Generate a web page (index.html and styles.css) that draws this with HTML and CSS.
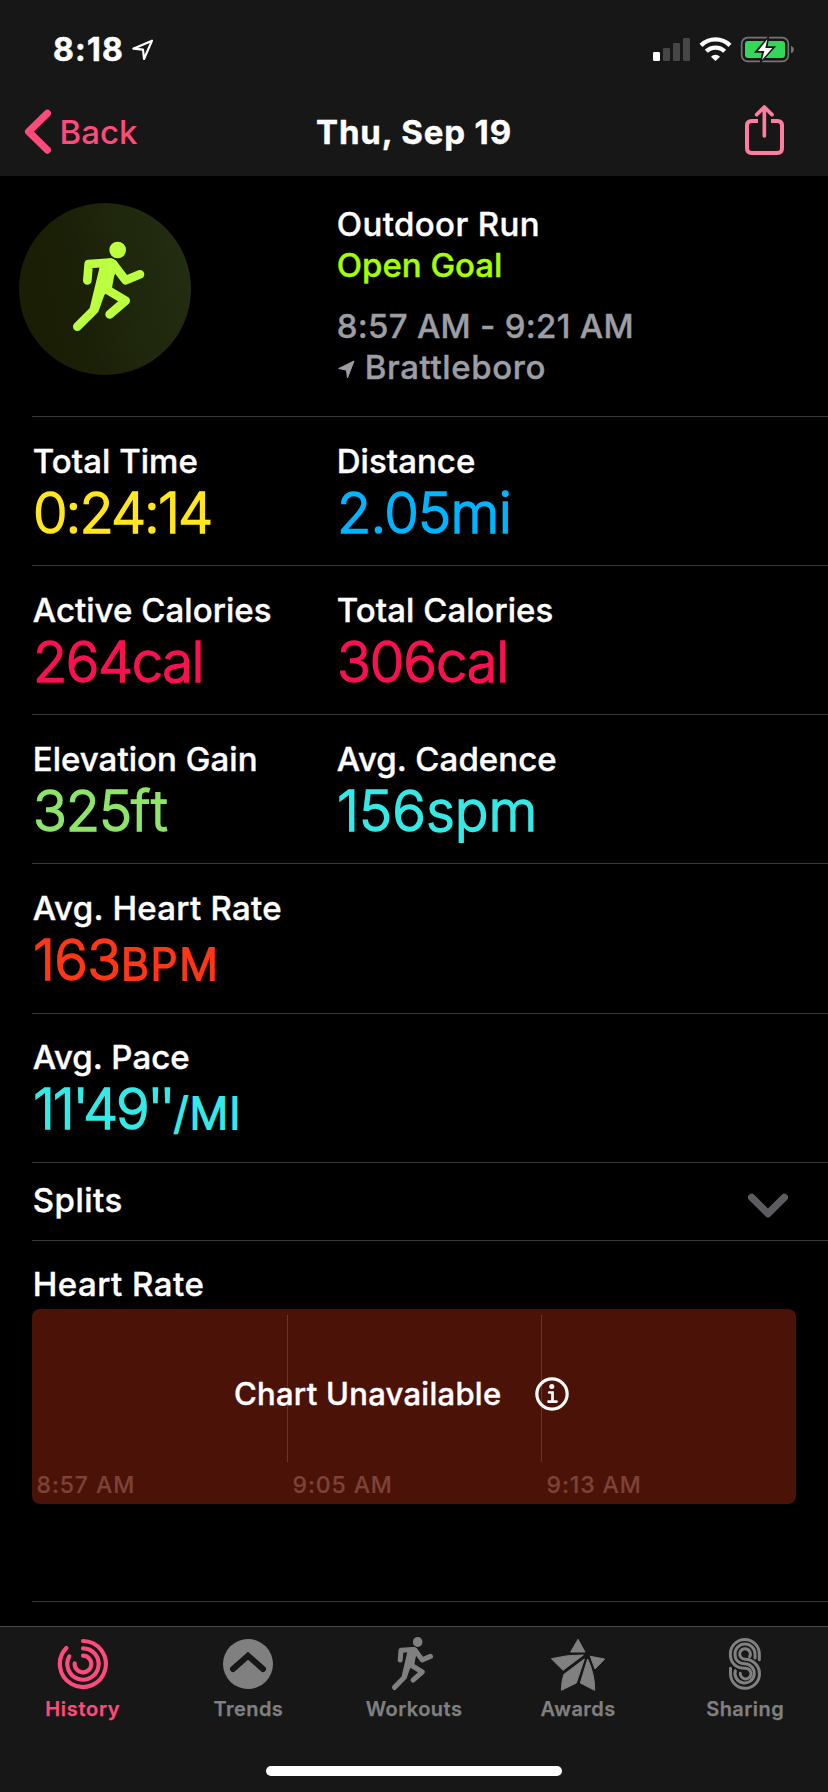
FILE: index.html
```html
<!DOCTYPE html>
<html lang="en">
<head>
<meta charset="utf-8">
<title>Workout</title>
<link rel="stylesheet" href="styles.css">
</head>
<body>
<div class="screen">
  <header class="top">
    <div class="status">
      <div class="status-left">
        <span class="clock">8:18</span>
        <svg class="loc" viewBox="393 114 72 72"><path d="M456 122 400 146 429 149 432 177Z" fill="none" stroke="#fff" stroke-width="6.5" stroke-linejoin="round"/></svg>
      </div>
      <svg class="status-icons" viewBox="714 108 429 81">
        <rect x="717" y="156" width="21" height="27" rx="4" fill="#fff"/>
        <g fill="#464646"><rect x="747" y="144" width="21" height="39" rx="4"/><rect x="777" y="129" width="21" height="54" rx="4"/><rect x="807" y="114" width="21" height="69" rx="4"/></g>
        <g fill="none" stroke="#fff" stroke-width="13">
          <path d="M861 136A62 62 0 0 1 948 136"/><path d="M877 154A39 39 0 0 1 932 154"/>
        </g>
        <path d="M904.500 183 891 170A19 19 0 0 1 918 170Z" fill="#fff"/>
        <rect x="983" y="113" width="140" height="71" rx="18" fill="none" stroke="#757575" stroke-width="5"/>
        <path d="M1131 137Q1140 141 1140 148.500T1131 160Z" fill="#757575"/>
        <rect x="993" y="123" width="120" height="51" rx="9" fill="#32d857"/>
        <path d="M1063 112 1025 156H1047L1040 186 1081 141H1058Z" fill="#171717" stroke="#171717" stroke-width="5"/>
        <path d="M1060 118 1032 153H1051L1044 180 1075 144H1054Z" fill="#fff"/>
      </svg>
    </div>
    <nav class="nav">
      <a class="back">
        <svg class="back-icon" viewBox="72 328 84 138"><path d="M142 341 86 396 142 451" fill="none" stroke="#ff4b7b" stroke-width="22" stroke-linecap="round" stroke-linejoin="round"/></svg>
        <span>Back</span>
      </a>
      <h1 class="title">Thu, Sep 19</h1>
      <svg class="share" viewBox="990 312 123 156" fill="none" stroke="#ff7d9e" stroke-width="12" stroke-linejoin="round">
        <path d="M1032 363H1013Q999 363 999 377V445Q999 459 1013 459H1090Q1104 459 1104 445V377Q1104 363 1090 363H1071"/>
        <path d="M1051 408V322M1028 344 1051 321 1074 344" stroke-width="11" stroke-linecap="round"/>
      </svg>
    </nav>
  </header>

  <main class="content">
    <section class="hero">
      <svg class="badge" viewBox="57 69 516 516">
        <defs><linearGradient id="g" x1="0" y1=".6" x2="1" y2=".4"><stop offset=".2" stop-color="#191e05"/><stop offset="1" stop-color="#232d12"/></linearGradient></defs>
        <circle cx="315" cy="327" r="258" fill="url(#g)"/>
        <g fill="none" stroke="#bcff41" stroke-width="26" stroke-linecap="round" stroke-linejoin="round">
          <path d="M262 301 266 252 330 248"/>
          <path d="M340 252 377 301 420 283"/>
          <path d="M281 391 232 440"/>
          <path d="M318 327 377 362 329 403"/>
        </g>
        <path d="M304 240 333 235Q350 238 355 255L342 290 336 324 313 345 294 398 269 385Z" fill="#bcff41"/>
        <circle cx="353" cy="210" r="25" fill="#bcff41"/>
      </svg>
      <div class="hero-text">
        <div class="kind">Outdoor Run</div>
        <div class="goal">Open Goal</div>
        <div class="when">8:57 AM - 9:21 AM</div>
        <div class="where">
          <svg class="pin" viewBox="52 508 52 58"><path d="M101 511 54 534 78 539 81 563Z" fill="#9d9da4" stroke="#9d9da4" stroke-width="3" stroke-linejoin="round"/></svg>
          <span>Brattleboro</span>
        </div>
      </div>
    </section>

    <section class="row">
      <div class="stat"><div class="label">Total Time</div><div class="value yellow time">0:24:14</div></div>
      <div class="stat"><div class="label">Distance</div><div class="value blue distance">2.05mi</div></div>
    </section>
    <section class="row">
      <div class="stat"><div class="label">Active Calories</div><div class="value pink active-cal">264cal</div></div>
      <div class="stat"><div class="label">Total Calories</div><div class="value pink total-cal">306cal</div></div>
    </section>
    <section class="row">
      <div class="stat"><div class="label">Elevation Gain</div><div class="value green gain">325<span class="feet">ft</span></div></div>
      <div class="stat"><div class="label">Avg. Cadence</div><div class="value cyan">156spm</div></div>
    </section>
    <section class="row row-heart">
      <div class="stat"><div class="label">Avg. Heart Rate</div><div class="value red bpm">163<span class="unit">BPM</span></div></div>
    </section>
    <section class="row row-pace">
      <div class="stat"><div class="label">Avg. Pace</div><div class="value cyan pace">11'49<span class="sec">''</span><span class="unit">/MI</span></div></div>
    </section>

    <section class="splits">
      <span class="label wide">Splits</span>
      <svg class="chevron" viewBox="1002 100 120 75"><path d="M1013 113 1062 162 1111 113" fill="none" stroke="#5b5b60" stroke-width="22" stroke-linecap="round" stroke-linejoin="round"/></svg>
    </section>

    <section class="heart">
      <div class="label wide">Heart Rate</div>
      <div class="chart">
        <div class="col"><span class="tick">8:57 AM</span></div>
        <div class="col"><span class="tick">9:05 AM</span></div>
        <div class="col"><span class="tick">9:13 AM</span></div>
        <div class="notice">
          <span>Chart Unavailable</span>
          <svg class="info" viewBox="362 653 101 101"><circle cx="412.500" cy="703.500" r="45" fill="none" stroke="#fff" stroke-width="9.500"/><circle cx="412" cy="681" r="7.500" fill="#fff"/><path d="M404 699H414V725M402 726H426" fill="none" stroke="#fff" stroke-width="8" stroke-linecap="round"/></svg>
        </div>
      </div>
    </section>
  </main>

  <footer class="tabbar">
    <nav class="tabs">
      <a class="tab active">
        <svg class="icon" viewBox="171 138 156 168" fill="none" stroke="#ff4b7b" stroke-width="12.500" stroke-linecap="round">
          <path d="M249 153A69 69 0 1 1 199 174"/><path d="M249 175A47 47 0 1 1 208 199"/><path d="M249 197A25 25 0 1 1 224 220"/>
        </svg>
        <span>History</span>
      </a>
      <a class="tab">
        <svg class="icon" viewBox="666 138 156 168"><circle cx="744" cy="222" r="75" fill="#808080"/><path d="M699 237 744 197 789 237" fill="none" stroke="#171717" stroke-width="18" stroke-linecap="round"/></svg>
        <span>Trends</span>
      </a>
      <a class="tab">
        <svg class="icon" viewBox="-78 138 156 168">
          <g transform="translate(-192 41.400) scale(.575 .593)">
            <g fill="none" stroke="#808080" stroke-width="26" stroke-linecap="round" stroke-linejoin="round">
              <path d="M262 284 266 235 330 231"/><path d="M340 235 377 284 420 266"/><path d="M281 374 232 423"/><path d="M318 310 377 345 329 386"/>
            </g>
            <path d="M304 223 333 218Q350 221 355 238L342 273 336 307 313 328 294 381 269 368Z" fill="#808080"/>
            <circle cx="353" cy="193" r="25" fill="#808080"/>
          </g>
        </svg>
        <span>Workouts</span>
      </a>
      <a class="tab awards">
        <svg class="icon award" viewBox="408 138 168 168" fill="#808080" stroke="#808080" stroke-width="3" stroke-linejoin="round">
          <path d="M492 148 513 186H470Z"/><path d="M412 206Q460 194 508 195L447 241Z"/><path d="M529 199 572 207 543 237Z"/><path d="M511 207 487 279 442 301Q443 270 450 253Z"/><path d="M521 207Q543 255 542 301L499 279Z"/>
        </svg>
        <span>Awards</span>
      </a>
      <a class="tab">
        <svg class="icon" viewBox="915 138 156 168" fill="none" stroke="#808080" stroke-width="9" stroke-linecap="round">
          <path d="M1036 209V192A43.500 43.500 0 0 0 949 192C949 220 967 235 993 235A16 16 0 1 1 979 250"/>
          <path d="M1023 204V192A30 30 0 0 0 963 192C963 211 975 221 993 221A29 29 0 1 1 964 242"/>
          <path d="M1007 200A16 16 0 1 0 993 208A43.500 43.500 0 1 1 949.500 250V235"/>
        </svg>
        <span>Sharing</span>
      </a>
    </nav>
    <div class="home"></div>
  </footer>
</div>
</body>
</html>
```
FILE: styles.css
```css
* { box-sizing: border-box; }
body { margin: 0; background: #000; color: #fff; font-family: Inter, "Liberation Sans", sans-serif; }
svg { display: block; flex: none; }
.screen { width: 828px; height: 1792px; display: flex; flex-direction: column; overflow: hidden; }

.top { height: 176px; background: #171717; }
.status { height: 88px; padding: 30px 33px 0 53px; display: flex; justify-content: space-between; align-items: flex-start; }
.status-left { display: flex; gap: 7px; }
.clock { font-size: 32px; line-height: 40px; font-weight: 700; letter-spacing: 1.2px; -webkit-text-stroke: .5px currentColor; }
.loc { width: 24px; height: 24px; margin-top: 8px; }
.status-icons { width: 143px; height: 27px; margin-top: 6px; }
.nav { height: 88px; padding: 0 43px; display: grid; grid-template-columns: 1fr auto 1fr; }
.back { display: flex; color: #ff4b7b; font-size: 33px; font-weight: 500; line-height: 40px; padding-top: 21px; gap: 7.500px; margin-left: -19px; }
.back span { padding-top: 3px; }
.back-icon { width: 28px; height: 46px; }
.title { margin: 0; padding-top: 24px; font-size: 33px; line-height: 40px; font-weight: 700; letter-spacing: .85px; -webkit-text-stroke: .4px currentColor; }
.share { width: 41px; height: 52px; margin-top: 16px; justify-self: end; }

.content { height: 1450px; padding-left: 32px; }
.hero { height: 241px; border-bottom: 1px solid #3a3a3a; display: grid; grid-template-columns: 304px 1fr; padding-top: 27px; }
.badge { width: 172px; height: 172px; margin-left: -13px; }
.hero-text { padding: 1px 0 0 .7px; font-size: 33px; line-height: 41px; font-weight: 500; -webkit-text-stroke: .4px currentColor; }
.kind { letter-spacing: .4px; }
.goal { color: #a6ff00; }
.when { margin-top: 20px; color: #9d9da4; letter-spacing: .28px; }
.where { color: #9d9da4; display: flex; gap: 10px; letter-spacing: .6px; }
.pin { width: 17px; height: 19px; margin: 13px 0 0 1px; }

.row { height: 149px; padding-top: 24px; border-bottom: 1px solid #3a3a3a; display: grid; grid-template-columns: 304px 1fr; }
.row-heart { height: 150px; }
.row-pace { padding-top: 23px; }
.label { padding-left: .7px; font-size: 33px; line-height: 40px; font-weight: 500; letter-spacing: .05px; -webkit-text-stroke: .4px currentColor; }
.row-heart .label { letter-spacing: .28px; }
.label.wide { letter-spacing: .5px; }
.value { margin-top: 6px; padding-left: 1px; font-size: 56px; line-height: 52px; font-weight: 300; -webkit-text-stroke: 1.5px currentColor; white-space: nowrap; }
.time { letter-spacing: -2px; }
.distance { letter-spacing: -.75px; }
.active-cal { letter-spacing: -1.5px; }
.total-cal { letter-spacing: -1.1px; }
.gain { letter-spacing: -1.2px; }
.feet { letter-spacing: 2px; }
.bpm { letter-spacing: -.8px; }
.pace { letter-spacing: -2.3px; }
.sec { letter-spacing: -4.500px; }
.unit { font-size: 43px; letter-spacing: 1.6px; -webkit-text-stroke-width: 1.8px; margin-left: .5px; }
.sec + .unit { margin-left: 2.500px; letter-spacing: 1.1px; }
.yellow { color: #ffe620; }
.blue { color: #00b4ff; }
.pink { color: #fa114f; }
.green { color: #8de56a; }
.cyan { color: #36e9e6; }
.red { color: #ff3717; }

.splits { height: 78px; padding: 17px 40px 0 0; border-bottom: 1px solid #3a3a3a; display: flex; justify-content: space-between; }
.chevron { width: 40px; height: 25px; margin-top: 13px; }

.heart { height: 361px; padding: 23px 32px 0 0; border-bottom: 1px solid #3a3a3a; }
.chart { position: relative; height: 195px; margin-top: 5px; border-radius: 8px; background: #4b1208; display: grid; grid-template-columns: 255px 254px 1fr; padding-top: 6px; }
.col { display: flex; height: 147px; padding-left: 4.500px; }
.col + .col { border-left: 1px solid #6a352c; }
.tick { margin-top: 156px; font-size: 23px; line-height: 28px; font-weight: 500; color: #7d4238; letter-spacing: .9px; -webkit-text-stroke: .2px currentColor; white-space: nowrap; }
.notice { position: absolute; inset: 0; display: flex; align-items: flex-start; padding: 65px 0 0 202px; gap: 33.500px; font-size: 31px; line-height: 40px; font-weight: 500; letter-spacing: .28px; -webkit-text-stroke: .4px currentColor; }
.info { width: 34px; height: 34px; margin-top: 3px; }

.tabbar { height: 166px; border-top: 1px solid #4a4a4a; background: #171717; }
.tabs { display: grid; grid-template-columns: repeat(5, 1fr); height: 139px; }
.tab { display: flex; flex-direction: column; align-items: center; color: #808080; font-size: 20px; line-height: 24px; font-weight: 600; letter-spacing: .45px; -webkit-text-stroke: .25px currentColor; padding-top: 9px; }
.tab span { margin-top: 5px; }
.tab.active { color: #ff4b7b; letter-spacing: .7px; }
.tab.awards { padding-right: 3px; }
.icon { width: 52px; height: 56px; }
.award { width: 56px; }
.home { width: 296px; height: 10px; border-radius: 5px; background: #fff; margin: 0 auto; }
```
